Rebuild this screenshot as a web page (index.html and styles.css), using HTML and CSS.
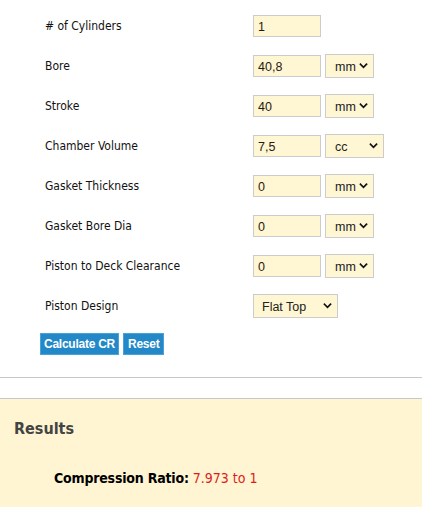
FILE: index.html
```html
<!DOCTYPE html>
<html>
<head>
<meta charset="utf-8">
<link rel="stylesheet" href="styles.css">
</head>
<body>
<form class="calc">
  <div class="row"><label class="lbl"># of Cylinders</label><input class="num" value="1"></div>
  <div class="row"><label class="lbl">Bore</label><input class="num" value="40,8"><span class="sel"><select class="unit"><option>mm</option><option>in</option></select><svg class="chev" viewBox="0 0 10 7"><path d="M1.5 1.5 L5 5 L8.5 1.5"/></svg></span></div>
  <div class="row"><label class="lbl">Stroke</label><input class="num" value="40"><span class="sel"><select class="unit"><option>mm</option><option>in</option></select><svg class="chev" viewBox="0 0 10 7"><path d="M1.5 1.5 L5 5 L8.5 1.5"/></svg></span></div>
  <div class="row"><label class="lbl">Chamber Volume</label><input class="num" value="7,5"><span class="sel"><select class="unit wide"><option>cc</option><option>cu in</option></select><svg class="chev" viewBox="0 0 10 7"><path d="M1.5 1.5 L5 5 L8.5 1.5"/></svg></span></div>
  <div class="row"><label class="lbl">Gasket Thickness</label><input class="num" value="0"><span class="sel"><select class="unit"><option>mm</option><option>in</option></select><svg class="chev" viewBox="0 0 10 7"><path d="M1.5 1.5 L5 5 L8.5 1.5"/></svg></span></div>
  <div class="row"><label class="lbl">Gasket Bore Dia</label><input class="num" value="0"><span class="sel"><select class="unit"><option>mm</option><option>in</option></select><svg class="chev" viewBox="0 0 10 7"><path d="M1.5 1.5 L5 5 L8.5 1.5"/></svg></span></div>
  <div class="row"><label class="lbl">Piston to Deck Clearance</label><input class="num" value="0"><span class="sel"><select class="unit"><option>mm</option><option>in</option></select><svg class="chev" viewBox="0 0 10 7"><path d="M1.5 1.5 L5 5 L8.5 1.5"/></svg></span></div>
  <div class="row"><label class="lbl">Piston Design</label><span class="sel first"><select class="design"><option>Flat Top</option><option>Dished</option><option>Domed</option></select><svg class="chev" viewBox="0 0 10 7"><path d="M1.5 1.5 L5 5 L8.5 1.5"/></svg></span></div>
  <div class="buttons"><button type="button" class="btn">Calculate CR</button><button type="button" class="btn">Reset</button></div>
</form>
<div class="sep"></div>
<section class="results">
  <h2 class="res-title">Results</h2>
  <p class="ratio"><strong>Compression Ratio:</strong> <span class="val">7.973 to 1</span></p>
</section>
</body>
</html>
```
FILE: styles.css
```css
html, body {
  margin: 0;
  padding: 0;
  background: #fff;
}
body {
  font-family: "DejaVu Sans Condensed", "DejaVu Sans", sans-serif;
  color: #000;
  height: 507px;
  display: flex;
  flex-direction: column;
}
.calc {
  padding: 6px 0 0 45px;
}
.row {
  height: 40px;
  display: flex;
  align-items: center;
}
.lbl {
  width: 208px;
  font-size: 12px;
  color: #111;
}
.num {
  box-sizing: border-box;
  width: 68px;
  height: 22px;
  margin: 0;
  padding: 1px 4px 0;
  border: 1px solid #ccc;
  background: #fff6d3;
  font-family: "Liberation Sans", Arial, sans-serif;
  font-size: 12.5px;
  color: #2a1a10;
  outline: none;
}
.sel {
  position: relative;
  display: flex;
  margin-left: 4px;
}
.sel.first {
  margin-left: 0;
}
.unit, .design {
  -webkit-appearance: none;
  appearance: none;
  box-sizing: border-box;
  height: 24px;
  margin: 0;
  padding: 1px 0 0 9px;
  border: 1px solid #ccc;
  border-radius: 0;
  background-color: #fff6d3;
  font-family: "Liberation Sans", Arial, sans-serif;
  font-size: 12.5px;
  color: #222;
  width: 49px;
  outline: none;
}
.unit.wide {
  width: 59px;
}
.design {
  width: 85px;
  padding-left: 8px;
}
.chev {
  position: absolute;
  right: 6px;
  top: 9px;
  width: 9px;
  height: 6px;
  pointer-events: none;
}
.chev path {
  fill: none;
  stroke: #111;
  stroke-width: 2;
  stroke-linecap: square;
}
.buttons {
  display: flex;
  gap: 4px;
  margin: 7px 0 0 -5px;
}
.btn {
  height: 22px;
  margin: 0;
  padding: 0 3px;
  border: 1px solid #4aa3d8;
  background: #2288c8;
  color: #fff;
  font-family: "Liberation Sans", Arial, sans-serif;
  font-weight: bold;
  font-size: 12px;
  letter-spacing: -0.25px;
  border-radius: 0;
}
.btn + .btn {
  padding: 0 4px;
}
.sep {
  margin-top: 22px;
  height: 20px;
  border-top: 1px solid #c8c8c8;
  border-bottom: 1px solid #c8c8c8;
}
.results {
  flex: 1;
  background: #fff5d2;
  padding: 20px 14px 0;
}
.res-title {
  margin: 0;
  font-size: 16px;
  font-weight: bold;
  color: #444;
  line-height: 20px;
}
.ratio {
  margin: 30px 0 0 40px;
  font-size: 14px;
  line-height: 18px;
}
.ratio strong {
  color: #000;
  letter-spacing: -0.2px;
}
.val {
  color: #dd1c1c;
}
```
